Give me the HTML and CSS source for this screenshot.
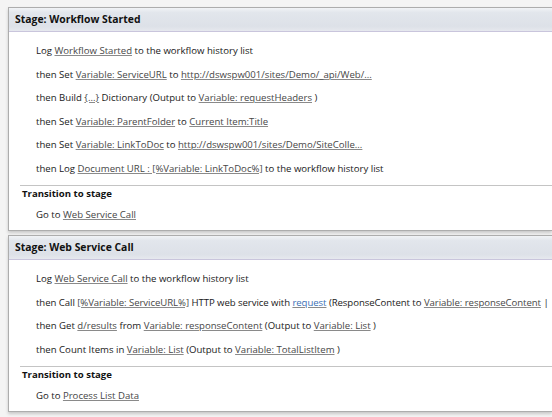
FILE: index.html
```html
<!DOCTYPE html>
<html lang="en-us">
  <head>
    <meta charset="utf-8">
    <title>Workflow stages</title>
    <link rel="stylesheet" href="styles.css">
  </head>
  <body>
    <div class="stage">
      <div class="stageHead">Stage: Workflow Started</div>
      <div class="actions">
        <p class="row">Log <a href="#">Workflow Started</a> to the workflow history list</p>
        <p class="row">then Set <a href="#">Variable: ServiceURL</a> to <a href="#">http://dswspw001/sites/Demo/_api/Web/...</a></p>
        <p class="row">then Build <a href="#">{...}</a> Dictionary (Output to <a href="#">Variable: requestHeaders</a> )</p>
        <p class="row">then Set <a href="#">Variable: ParentFolder</a> to <a href="#">Current Item:Title</a></p>
        <p class="row">then Set <a href="#">Variable: LinkToDoc</a> to <a href="#">http://dswspw001/sites/Demo/SiteColle...</a></p>
        <p class="row">then Log <a href="#">Document URL : [%Variable: LinkToDoc%]</a> to the workflow history list</p>
      </div>
      <div class="transition">
        <p class="transTitle">Transition to stage</p>
        <p class="goTo">Go to <a href="#">Web Service Call</a></p>
      </div>
    </div>

    <div class="stage">
      <div class="stageHead">Stage: Web Service Call</div>
      <div class="actions">
        <p class="row">Log <a href="#">Web Service Call</a> to the workflow history list</p>
        <p class="row tight">then Call <a href="#">[%Variable: ServiceURL%]</a> HTTP web service with <a href="#" class="blue">request</a> (ResponseContent to <a href="#">Variable: responseContent</a> |</p>
        <p class="row">then Get <a href="#">d/results</a> from <a href="#">Variable: responseContent</a> (Output to <a href="#">Variable: List</a> )</p>
        <p class="row">then Count Items in <a href="#">Variable: List</a> (Output to <a href="#">Variable: TotalListItem</a> )</p>
      </div>
      <div class="transition">
        <p class="transTitle">Transition to stage</p>
        <p class="goTo">Go to <a href="#">Process List Data</a></p>
      </div>
    </div>
  </body>
</html>
```

FILE: styles.css
```css
html {
  font-family: "Open Sans", "Noto Sans", sans-serif;
}

body {
  margin: 0;
  padding: 7px 0 0 8px;
  height: 410px;
  overflow: hidden;
  background-color: #f4f4f4;
  font-size: 9.6px;
  color: #1a1a1a;
}

p {
  margin: 0;
  white-space: nowrap;
}

a {
  color: #474747;
  text-decoration: underline;
  text-decoration-color: #8a8a8a;
}

a.blue {
  color: #3b6fb6;
}

.stage {
  overflow: hidden;
  background-color: #fff;
  border: 1px solid #adadad;
  border-right: none;
  box-shadow: 0 2px 3px rgba(0, 0, 0, .18);
  margin-bottom: 4px;
}

.stageHead {
  height: 23px;
  line-height: 23px;
  padding-left: 6px;
  font-weight: bold;
  font-size: 10.4px;
  color: #111;
  background-image: linear-gradient(to bottom, #f1f3f6 0%, #e2e6ec 20%, #dde1e8 80%, #e6e8ee 100%);
  border-bottom: 1px solid #c9c5dc;
}

.actions {
  padding: 7px 0 0 27px;
}

.row {
  height: 23.5px;
  line-height: 23.5px;
}

/* longest line, squeezed so the trailing bar still shows */
.tight {
  letter-spacing: -0.06px;
}

.transition {
  margin: 5px 0 0 11px;
  border-top: 1px solid #c4c4c4;
  padding-bottom: 3px;
}

.transTitle {
  line-height: 16px;
  padding-left: 2px;
  font-weight: bold;
  color: #111;
}

.goTo {
  line-height: 24px;
  padding: 1px 0 0 16px;
}
```
